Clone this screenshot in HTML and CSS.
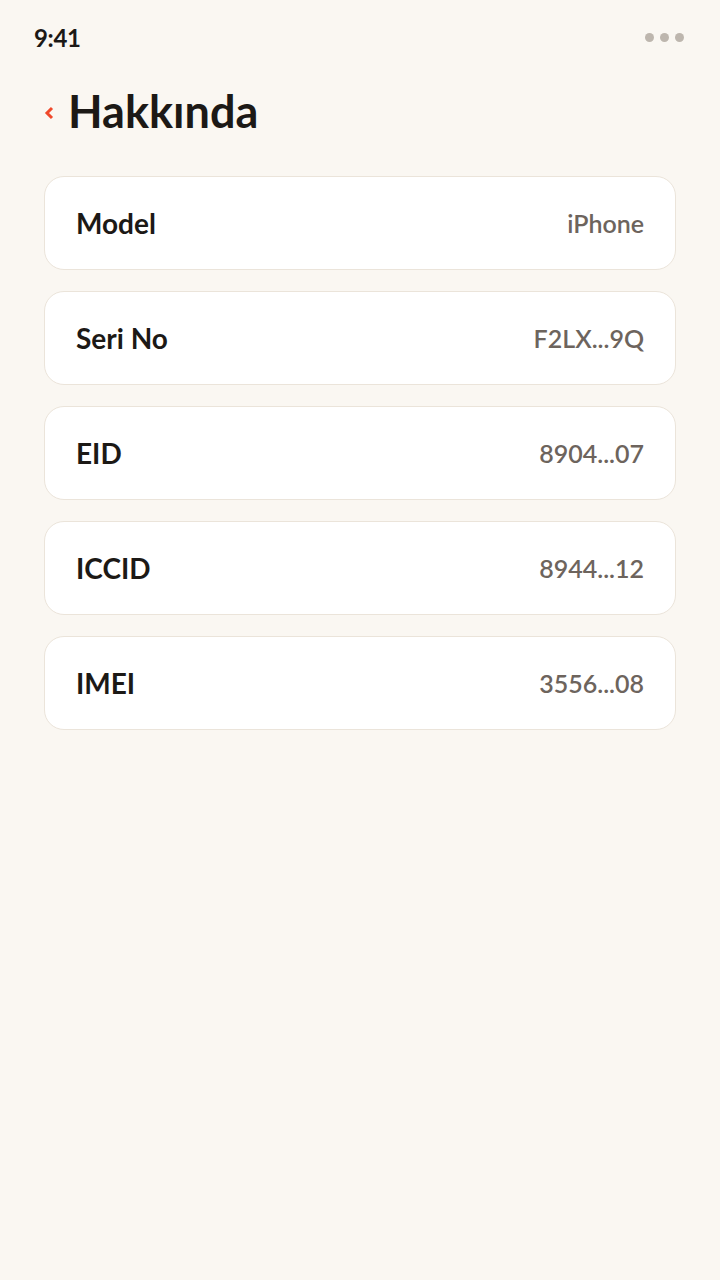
FILE: index.html
```html
<!DOCTYPE html>
<html>
	<head>
		<meta charset="utf-8">
		<title>Hakkında</title>
		<link rel="stylesheet" href="styles.css">
	</head>
	<body>
		<div class="screen">
			<div class="status">
				<span class="time">9:41</span>
				<span class="dots"><i></i><i></i><i></i></span>
			</div>
			<div class="header">
				<svg class="back" width="10" height="14" viewBox="0 0 10 14">
					<path d="M8 2 L3 7 L8 12" fill="none" stroke="#f0492b" stroke-width="3" stroke-linejoin="miter"/>
				</svg>
				<h1 class="title">Hakkında</h1>
			</div>
			<ul class="list">
				<li class="item"><span class="label">Model</span><span class="value">iPhone</span></li>
				<li class="item"><span class="label">Seri No</span><span class="value">F2LX...9Q</span></li>
				<li class="item"><span class="label">EID</span><span class="value">8904...07</span></li>
				<li class="item"><span class="label">ICCID</span><span class="value">8944...12</span></li>
				<li class="item"><span class="label">IMEI</span><span class="value">3556...08</span></li>
			</ul>
		</div>
	</body>
</html>
```

FILE: styles.css
```css
*{
	margin: 0;
	padding: 0;
	box-sizing: border-box;
}

ul{
	list-style: none;
}

body{
	background-color: #faf7f2;
	font-family: Lato, "Noto Sans", sans-serif;
	color: #1c1916;
}

.screen{
	width: 720px;
	height: 1280px;
	padding: 0 44px;
}

.status{
	height: 74px;
	display: flex;
	align-items: center;
	justify-content: space-between;
	margin: 0 -8px 0 -10px;
}

.status .time{
	font-size: 24px;
	font-weight: 700;
	letter-spacing: -0.3px;
}

.status .dots{
	display: flex;
	gap: 6px;
}

.status .dots i{
	width: 9px;
	height: 9px;
	border-radius: 50%;
	background-color: #bdb6ae;
}

.header{
	display: flex;
	align-items: center;
	gap: 14px;
	height: 74px;
}

.header .back{
	display: block;
	margin-top: 3px;
}

.header .title{
	font-size: 45px;
	font-weight: 700;
	letter-spacing: 0;
}

.list{
	margin-top: 28px;
	display: flex;
	flex-direction: column;
	gap: 21px;
}

.list .item{
	height: 94px;
	background-color: #fff;
	border: 1px solid #ebe4da;
	border-radius: 20px;
	display: flex;
	align-items: center;
	justify-content: space-between;
	padding: 0 31px;
}

.list .label{
	font-size: 28px;
	font-weight: 700;
}

.list .value{
	font-size: 25px;
	font-weight: 600;
	color: #6d645d;
}
```
